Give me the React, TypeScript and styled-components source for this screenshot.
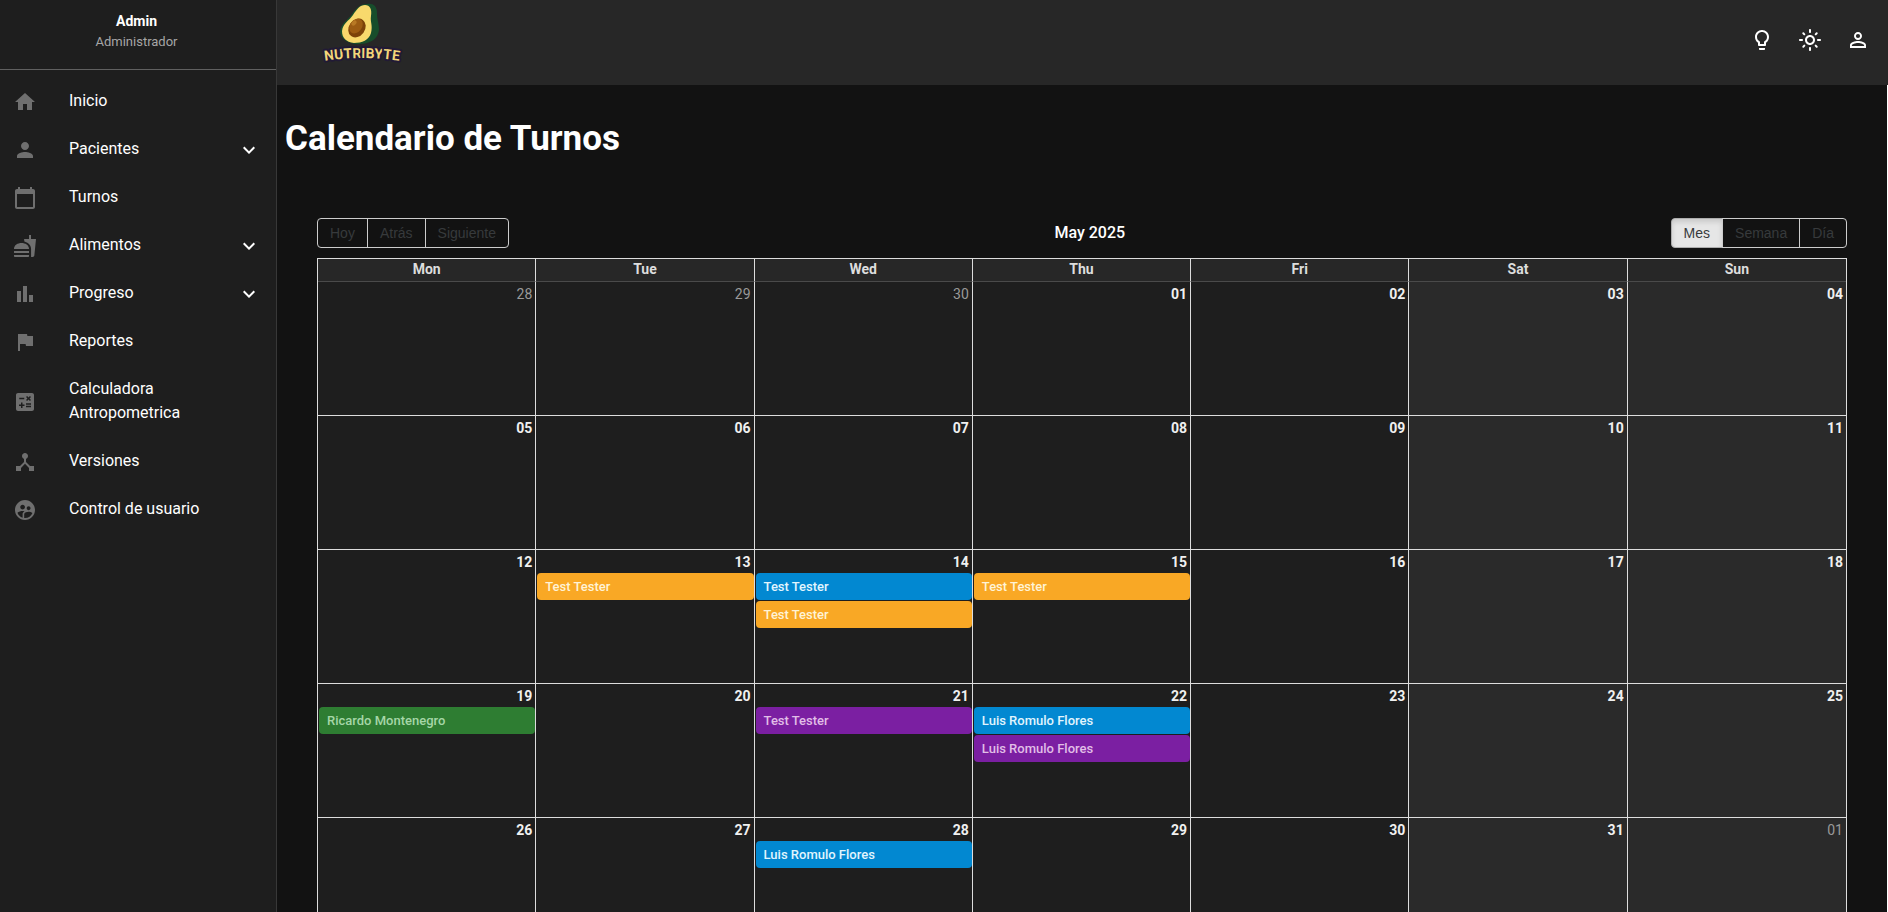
import React from "react";
import styled, { createGlobalStyle } from "styled-components";
import {
  MdHome, MdPerson, MdCalendarToday, MdFastfood, MdBarChart, MdFlag, MdCalculate,
  MdDeviceHub, MdSupervisedUserCircle, MdExpandMore, MdLightbulbOutline,
  MdOutlineLightMode, MdPersonOutline,
} from "react-icons/md";

const Global = createGlobalStyle`
  *, *::before, *::after { box-sizing: border-box; }
  html, body { margin: 0; }
  body {
    background: #121212;
    color: #fff;
    font: 400 16px/24px Roboto, "Liberation Sans", sans-serif;
    overflow: hidden;
  }
`;

const Shell = styled.div`
  display: flex;
  height: 100vh;
  overflow: hidden;
`;

const Sidebar = styled.aside`
  flex: 0 0 277px;
  background: #1e1e1e;
  border-right: 1px solid #383838;
`;

const Profile = styled.div`
  display: flex;
  flex-direction: column;
  height: 70px;
  padding: 9px 3px 0 0;
  text-align: center;
  border-bottom: 1px solid #606060;
`;

const ProfileName = styled.strong`
  font-size: 14px;
  line-height: 24px;
  font-weight: 700;
`;

const ProfileRole = styled.span`
  font-size: 13px;
  line-height: 18px;
  font-weight: 400;
  color: #a6a6a6;
`;

const Menu = styled.ul`
  list-style: none;
  margin: 0;
  padding: 8px 0;
`;

const MenuLink = styled.a`
  display: flex;
  align-items: center;
  min-height: 48px;
  padding: 11px 15px 11px 13px;
  color: #fff;
  text-decoration: none;
`;

const MenuIcon = styled.span`
  display: flex;
  flex: 0 0 56px;
  color: #6f6f6f;
`;

const MenuText = styled.span`
  flex: 1;
  padding-bottom: 2px;
`;

const Main = styled.main`
  display: flex;
  flex-direction: column;
  flex: 1;
  min-width: 0;
`;

const TopBar = styled.header`
  display: flex;
  flex: 0 0 85px;
  align-items: flex-start;
  justify-content: space-between;
  padding: 0 18px 0 48px;
  background: #272727;
`;

const Actions = styled.div`
  display: flex;
  gap: 24px;
  padding-top: 28px;
`;

const IconButton = styled.button`
  display: flex;
  padding: 0;
  border: 0;
  background: none;
  color: #fff;
  cursor: pointer;
`;

const Content = styled.div`
  flex: 1;
  min-height: 0;
  overflow: hidden;
  border-right: 1px solid #fff;
`;

const Title = styled.h1`
  margin: 33px 8px 58px;
  font-size: 35px;
  line-height: 42px;
  font-weight: 700;
`;

const Calendar = styled.section`
  margin: 0 40px;
`;

const Toolbar = styled.div`
  display: flex;
  align-items: center;
  margin-bottom: 10px;
`;

const Period = styled.span`
  flex: 1;
  text-align: center;
  font-weight: 500;
`;

const ButtonGroup = styled.div`
  display: flex;
`;

const ToolButton = styled.button<{ $active?: boolean }>`
  height: 30px;
  margin-left: -1px;
  padding: 0 12px;
  border: 1px solid ${(p) => (p.$active ? "#adadad" : "#ccc")};
  background: ${(p) => (p.$active ? "#e6e6e6" : "transparent")};
  box-shadow: ${(p) => (p.$active ? "inset 0 3px 5px rgba(0, 0, 0, 0.125)" : "none")};
  color: #373a3c;
  font: 400 14px/28px "Liberation Sans", Arial, sans-serif;
  cursor: pointer;
  &:first-child { margin-left: 0; border-radius: 4px 0 0 4px; }
  &:last-child { border-radius: 0 4px 4px 0; }
`;

const Month = styled.table`
  width: 100%;
  table-layout: fixed;
  border-collapse: separate;
  border-spacing: 0;
  border: 1px solid #ddd;
`;

const DayHeader = styled.th`
  height: 23px;
  padding: 0 3px 2px;
  background: #272727;
  border-right: 1px solid #ddd;
  border-bottom: 1px solid #4a4a4a;
  color: #ddd;
  font-size: 14px;
  line-height: 20px;
  font-weight: 700;
  &:last-child { border-right: 0; }
`;

const DayCell = styled.td<{ $weekend: boolean; $first: boolean }>`
  height: ${(p) => (p.$first ? "133px" : "134px")};
  padding: 1px 0 0 1px;
  vertical-align: top;
  background: ${(p) => (p.$weekend ? "#2a2a2a" : "#1e1e1e")};
  border-top: ${(p) => (p.$first ? "0" : "1px solid #ddd")};
  border-right: 1px solid #ddd;
  &:last-child { border-right: 0; }
`;

const DayNumber = styled.div<{ $off: boolean }>`
  padding-right: 3px;
  text-align: right;
  font-size: 14px;
  line-height: 22px;
  font-weight: ${(p) => (p.$off ? 400 : 700)};
  color: ${(p) => (p.$off ? "#999" : "#f0f0f0")};
`;

type Tone = "amber" | "blue" | "green" | "purple";
const tones: Record<Tone, [string, string]> = {
  amber: ["#f9a825", "#fff3d6"],
  blue: ["#0288d1", "#e1f5fe"],
  green: ["#2e7d32", "#a5d6a7"],
  purple: ["#7b1fa2", "#e1bee7"],
};

const EventButton = styled.button<{ $tone: Tone }>`
  display: block;
  width: 100%;
  height: 27px;
  margin-bottom: 1px;
  padding: 0 8px;
  border: 0;
  border-radius: 4px;
  background: ${(p) => tones[p.$tone][0]};
  color: ${(p) => tones[p.$tone][1]};
  font: 500 13px/27px Roboto, sans-serif;
  text-align: left;
  cursor: pointer;
`;

const menu = [
  { label: "Inicio", icon: MdHome },
  { label: "Pacientes", icon: MdPerson, expands: true },
  { label: "Turnos", icon: MdCalendarToday },
  { label: "Alimentos", icon: MdFastfood, expands: true },
  { label: "Progreso", icon: MdBarChart, expands: true },
  { label: "Reportes", icon: MdFlag },
  { label: "Calculadora Antropometrica", icon: MdCalculate },
  { label: "Versiones", icon: MdDeviceHub },
  { label: "Control de usuario", icon: MdSupervisedUserCircle },
];

const weekdays = ["Mon", "Tue", "Wed", "Thu", "Fri", "Sat", "Sun"];

const weeks = [
  ["28", "29", "30", "01", "02", "03", "04"],
  ["05", "06", "07", "08", "09", "10", "11"],
  ["12", "13", "14", "15", "16", "17", "18"],
  ["19", "20", "21", "22", "23", "24", "25"],
  ["26", "27", "28", "29", "30", "31", "01"],
];

// Events keyed by "week-day" position in the grid.
const events: Record<string, { name: string; tone: Tone }[]> = {
  "2-1": [{ name: "Test Tester", tone: "amber" }],
  "2-2": [{ name: "Test Tester", tone: "blue" }, { name: "Test Tester", tone: "amber" }],
  "2-3": [{ name: "Test Tester", tone: "amber" }],
  "3-0": [{ name: "Ricardo Montenegro", tone: "green" }],
  "3-2": [{ name: "Test Tester", tone: "purple" }],
  "3-3": [{ name: "Luis Romulo Flores", tone: "blue" }, { name: "Luis Romulo Flores", tone: "purple" }],
  "4-2": [{ name: "Luis Romulo Flores", tone: "blue" }],
};

const isOff = (week: number, day: number) => (week === 0 && day < 3) || (week === 4 && day === 6);

function Logo() {
  return (
    <svg width="76" height="68" viewBox="0 0 76 68" overflow="visible" role="img" aria-label="Nutribyte">
      <path d="M42 4C48 3 52 6 52 13C52 20 54 23 54 30C53 38 47 43 36 44C25 45 16 40 15 32C16 23 22 21 27 14C32 7 36 4 42 4Z" fill="#174d2b" />
      <path d="M40 5C45 5 47 9 46 16C45 22 48 25 46 33C44 40 37 43 29 43C21 42 17 38 17 31C18 23 24 21 28 15C32 9 35 5 40 5Z" fill="#f8d96c" />
      <ellipse cx="32" cy="28" rx="8" ry="10" transform="rotate(36 32 28)" fill="#7c4309" />
      <ellipse cx="31" cy="26" rx="6" ry="8" transform="rotate(36 31 26)" fill="#9c5c12" />
      <ellipse cx="29" cy="23" rx="2" ry="3" transform="rotate(45 29 23)" fill="#b87924" />
      <path id="wordmark-arc" d="M-13 63Q37 53 87 63" fill="none" />
      <text
        fontFamily="Roboto, sans-serif"
        fontSize="14"
        fontWeight="700"
        fill="#f3d67a"
        stroke="#211a35"
        strokeWidth="4"
        strokeLinejoin="round"
        paintOrder="stroke"
        textAnchor="middle"
      >
        <textPath href="#wordmark-arc" startOffset="50%">NUTRIBYTE</textPath>
      </text>
    </svg>
  );
}

export default function App() {
  return (
    <Shell>
      <Global />
      <Sidebar>
        <Profile>
          <ProfileName>Admin</ProfileName>
          <ProfileRole>Administrador</ProfileRole>
        </Profile>
        <nav>
          <Menu>
            {menu.map(({ label, icon: Icon, expands }) => (
              <li key={label}>
                <MenuLink href="#">
                  <MenuIcon><Icon size={24} /></MenuIcon>
                  <MenuText>{label}</MenuText>
                  {expands && <MdExpandMore size={24} />}
                </MenuLink>
              </li>
            ))}
          </Menu>
        </nav>
      </Sidebar>
      <Main>
        <TopBar>
          <Logo />
          <Actions>
            <IconButton aria-label="Consejos"><MdLightbulbOutline size={24} /></IconButton>
            <IconButton aria-label="Tema"><MdOutlineLightMode size={24} /></IconButton>
            <IconButton aria-label="Cuenta"><MdPersonOutline size={24} /></IconButton>
          </Actions>
        </TopBar>
        <Content>
          <Title>Calendario de Turnos</Title>
          <Calendar>
            <Toolbar>
              <ButtonGroup>
                <ToolButton>Hoy</ToolButton>
                <ToolButton>Atrás</ToolButton>
                <ToolButton>Siguiente</ToolButton>
              </ButtonGroup>
              <Period>May 2025</Period>
              <ButtonGroup>
                <ToolButton $active>Mes</ToolButton>
                <ToolButton>Semana</ToolButton>
                <ToolButton>Día</ToolButton>
              </ButtonGroup>
            </Toolbar>
            <Month>
              <thead>
                <tr>{weekdays.map((d) => <DayHeader key={d} scope="col">{d}</DayHeader>)}</tr>
              </thead>
              <tbody>
                {weeks.map((week, w) => (
                  <tr key={w}>
                    {week.map((day, d) => (
                      <DayCell key={d} $weekend={d > 4} $first={w === 0}>
                        <DayNumber $off={isOff(w, d)}>{day}</DayNumber>
                        {(events[`${w}-${d}`] ?? []).map((e, i) => (
                          <EventButton key={i} $tone={e.tone}>{e.name}</EventButton>
                        ))}
                      </DayCell>
                    ))}
                  </tr>
                ))}
              </tbody>
            </Month>
          </Calendar>
        </Content>
      </Main>
    </Shell>
  );
}
